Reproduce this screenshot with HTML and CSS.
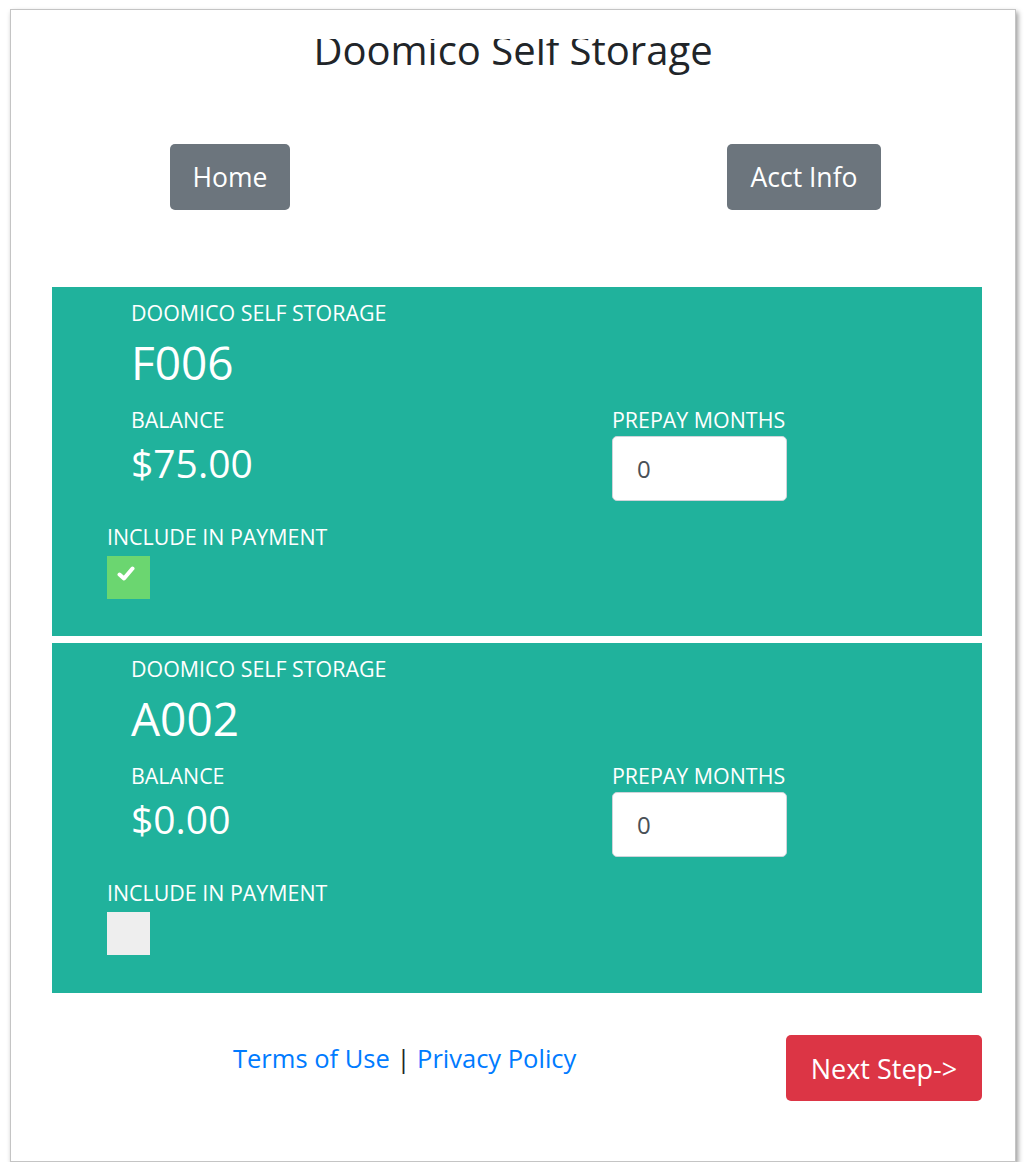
FILE: index.html
```html
<!DOCTYPE html>
<html lang="en">
<head>
<meta charset="utf-8">
<title>Doomico Self Storage</title>
<link rel="stylesheet" href="styles.css">
</head>
<body>
<div class="frame">
  <div class="title-clip">
    <h1 class="title">Doomico Self Storage</h1>
  </div>
  <nav class="nav">
    <a class="btn btn-gray btn-home" href="#">Home</a>
    <a class="btn btn-gray btn-acct" href="#">Acct Info</a>
  </nav>

  <section class="unit">
    <div class="unit-main">
      <div class="label">DOOMICO SELF STORAGE</div>
      <div class="unit-id">F006</div>
      <div class="unit-row">
        <div class="col-balance">
          <div class="label">BALANCE</div>
          <div class="amount">$75.00</div>
        </div>
        <div class="col-prepay">
          <div class="label">PREPAY MONTHS</div>
          <input class="prepay-input" type="text" value="0">
        </div>
      </div>
    </div>
    <div class="include">
      <div class="label">INCLUDE IN PAYMENT</div>
      <div class="check check-on">
        <svg viewBox="0 0 18 17" width="18" height="17"><path d="M2.5 9.5 L7 13.5 L15.5 3.5" fill="none" stroke="#fff" stroke-width="4" stroke-linecap="round" stroke-linejoin="round"/></svg>
      </div>
    </div>
  </section>

  <section class="unit unit-last">
    <div class="unit-main">
      <div class="label">DOOMICO SELF STORAGE</div>
      <div class="unit-id">A002</div>
      <div class="unit-row">
        <div class="col-balance">
          <div class="label">BALANCE</div>
          <div class="amount">$0.00</div>
        </div>
        <div class="col-prepay">
          <div class="label">PREPAY MONTHS</div>
          <input class="prepay-input" type="text" value="0">
        </div>
      </div>
    </div>
    <div class="include">
      <div class="label">INCLUDE IN PAYMENT</div>
      <div class="check check-off"></div>
    </div>
  </section>

  <footer class="footer">
    <div class="links"><a href="#">Terms of Use</a> | <a href="#">Privacy Policy</a></div>
    <a class="btn btn-red" href="#">Next Step-&gt;</a>
  </footer>
</div>
</body>
</html>
```

FILE: styles.css
```css
* { box-sizing: border-box; }
html, body { margin: 0; padding: 0; background: #fff; }
body { font-family: "Open Sans", "Noto Sans", "DejaVu Sans", sans-serif; color: #212529; }

.frame {
  margin: 9px 0 0 10px;
  width: 1006px;
  height: 1153px;
  border: 1px solid #c4c4c4;
  box-shadow: 2px 3px 5px rgba(0,0,0,0.4);
  background: #fff;
  overflow: hidden;
}

.title-clip {
  margin-top: 29px;
  height: 42px;
  overflow: hidden;
}
.title {
  margin: -13px 0 0 0;
  font-size: 40px;
  line-height: 48px;
  font-weight: 400;
  text-align: center;
  color: #212529;
}

.nav {
  display: flex;
  justify-content: space-between;
  margin: 63px 134px 0 159px;
}

.btn {
  display: inline-flex;
  align-items: center;
  justify-content: center;
  height: 66px;
  border-radius: 5px;
  color: #fff;
  text-decoration: none;
  font-size: 26.5px;
}
.btn-gray { background: #6c757d; }
.btn-home { width: 120px; }
.btn-acct { width: 154px; }
.btn-red { background: #dc3545; width: 196px; font-size: 27px; }

.unit {
  margin: 77px 33px 0 41px;
  background: #20b29c;
  color: #fff;
  padding: 12px 0 37px 55px;
}
.unit + .unit { margin-top: 7px; }
.unit-last { padding-bottom: 38px; }

.unit-main { padding-left: 24px; }

.label {
  font-size: 21.4px;
  line-height: 28px;
}
.unit-id {
  font-size: 46px;
  line-height: 70px;
}
.unit-row {
  display: flex;
  margin-top: 9px;
}
.col-balance { width: 481px; }
.amount {
  font-size: 39px;
  line-height: 44px;
  margin-top: 7px;
}
.prepay-input {
  display: block;
  margin-top: 2px;
  width: 175px;
  height: 65px;
  border: 1px solid #ced4da;
  border-radius: 5px;
  background: #fff;
  padding: 0 0 0 24px;
  font-family: "Open Sans", "Noto Sans", sans-serif;
  font-size: 24px;
  color: #495057;
  outline: none;
}

.include { margin-top: 22px; }
.check {
  margin-top: 5px;
  width: 43px;
  height: 43px;
}
.check-on {
  background: #6bd670;
  padding: 9px 0 0 10px;
}
.check-on svg { display: block; }
.check-off { background: #eeeeee; }

.footer {
  display: flex;
  justify-content: space-between;
  align-items: flex-start;
  margin: 42px 33px 0 41px;
}
.links {
  margin-left: 181px;
  padding-top: 5px;
  font-size: 25.5px;
  line-height: 36px;
  color: #212529;
}
.links a { color: #007bff; text-decoration: none; }
```
